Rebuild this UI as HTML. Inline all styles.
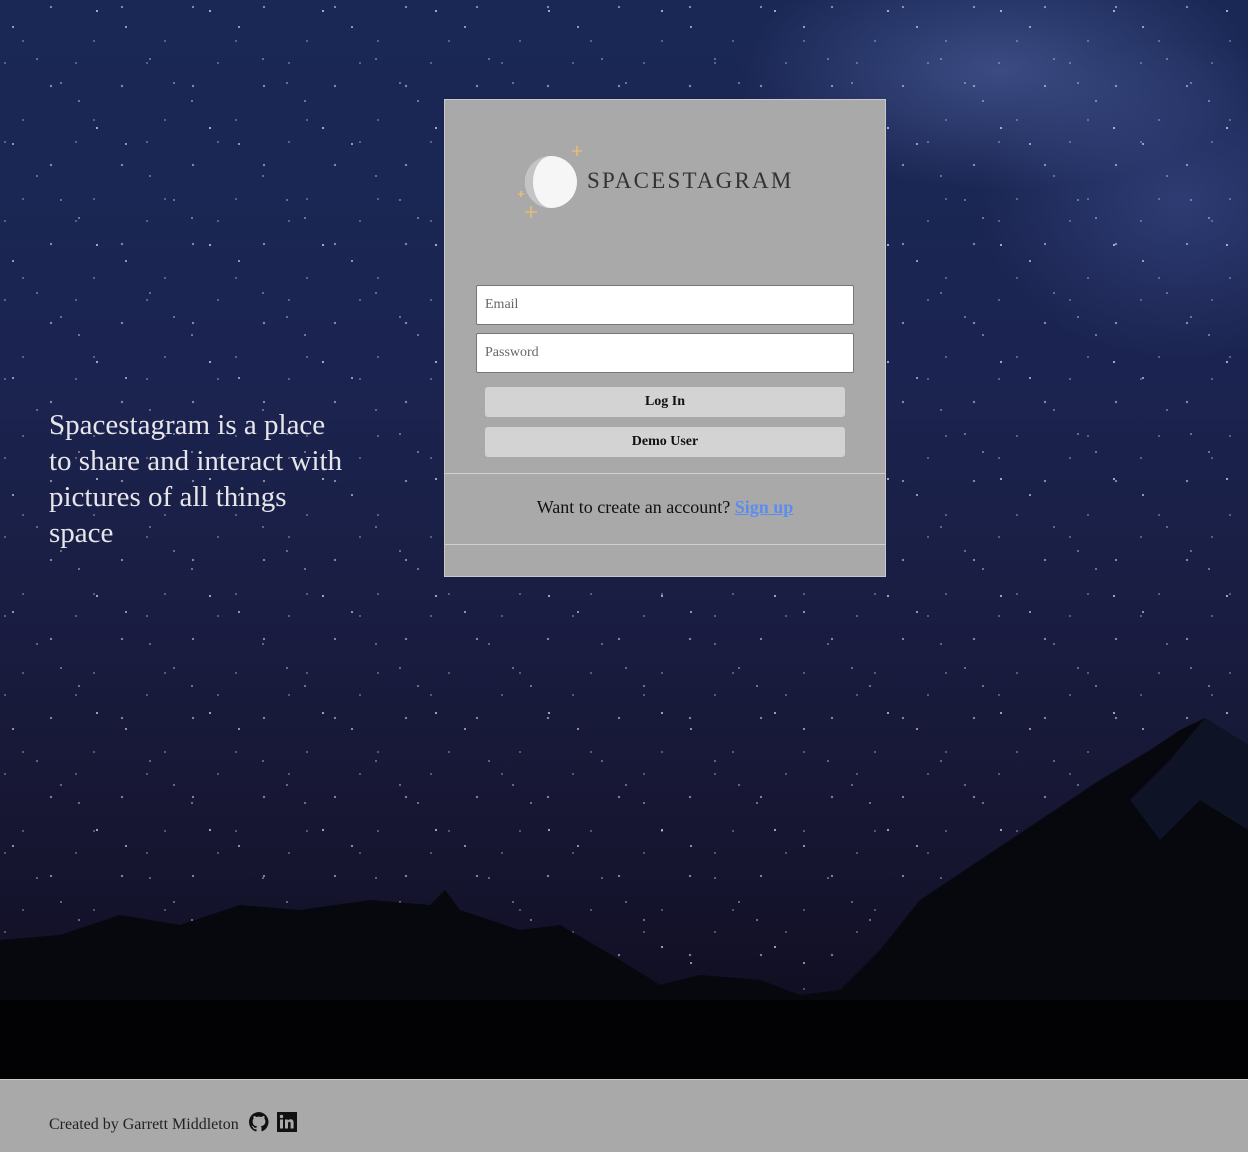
<!DOCTYPE html>
<html><head><meta charset="utf-8"><style>
*{margin:0;padding:0;box-sizing:border-box}
html,body{width:1248px;height:1152px;overflow:hidden;font-family:"Liberation Serif",serif}
.sky{position:absolute;left:0;top:0;width:1248px;height:1079px;
background:
radial-gradient(ellipse 260px 120px at 1000px 70px,rgba(110,130,200,.4),transparent),
radial-gradient(ellipse 200px 160px at 1180px 200px,rgba(90,110,190,.3),transparent),
linear-gradient(180deg,#1a2856 0%,#1b2450 35%,#191c3f 60%,#161530 80%,#0c0b1a 100%);}
.stars{position:absolute;left:0;top:0;width:1248px;height:1079px;opacity:.8;
background-image:
radial-gradient(1.2px 1.2px at 13px 27px,#fff 50%,transparent),
radial-gradient(1px 1px at 61px 83px,#cfe 50%,transparent),
radial-gradient(1.3px 1.3px at 97px 11px,#fff 50%,transparent),
radial-gradient(1px 1px at 37px 59px,#ddf 50%,transparent),
radial-gradient(1px 1px at 79px 101px,#fff 50%,transparent);
background-size:113px 117px;}
.stars2{position:absolute;left:0;top:0;width:1248px;height:1079px;opacity:.6;
background-image:
radial-gradient(1px 1px at 23px 41px,#fff 50%,transparent),
radial-gradient(1.4px 1.4px at 51px 7px,#eef 50%,transparent),
radial-gradient(1px 1px at 5px 63px,#fff 50%,transparent);
background-size:71px 79px;}
.mt{position:absolute;left:0;top:0}
.tag{position:absolute;left:49px;top:407px;color:#e6e6ea;font-size:29px;line-height:36px;width:296px}
.card{position:absolute;left:444px;top:99px;width:442px;height:478px;background:#a9a9a9;border:1px solid #c8c8c8}
.logo{position:absolute;left:72px;top:44px}
.logo span{position:absolute;left:70px;top:24px;font-size:23px;letter-spacing:2.2px;color:#333;white-space:nowrap}
.in{position:absolute;left:31px;width:378px;height:40px;background:#fff;border:1px solid #777;border-radius:2px;font-size:14px;color:#666;padding:11px 8px}
.btn{position:absolute;left:40px;width:360px;height:30px;background:#d3d3d3;border-radius:3px;font-weight:bold;font-size:14px;text-align:center;line-height:30px;color:#111}
.sep{position:absolute;left:0;width:440px;border-top:1px solid #d0d0d0}
.want{position:absolute;left:0;width:440px;top:397px;text-align:center;font-size:18px;color:#111}
.want a{color:#5b8def;font-weight:bold;text-decoration:underline}
.foot{position:absolute;left:0;top:1079px;width:1248px;height:73px;background:#a9a9a9;border-top:1px solid #ccc}
.foot p{position:absolute;left:49px;top:32px;font-size:16px;color:#222}
</style></head><body>
<div class="sky"></div><div class="stars"></div><div class="stars2"></div>
<svg class="mt" width="1248" height="1079">
<polygon fill="#07070e" points="0,940 60,935 120,915 180,925 240,905 300,910 370,900 430,905 445,890 460,910 520,930 560,925 620,960 660,985 700,975 760,980 800,995 840,990 880,950 920,900 980,860 1040,820 1100,780 1150,750 1180,730 1205,718 1248,745 1248,1079 0,1079"/>
<polygon fill="#121830" opacity=".7" points="1205,718 1170,760 1130,800 1160,840 1200,800 1248,830 1248,745"/>
<rect x="0" y="1000" width="1248" height="79" fill="#020204"/>
</svg>
<div class="tag">Spacestagram is a place to share and interact with pictures of all things space</div>
<div class="card">
 <div class="logo">
  <svg width="70" height="80" viewBox="0 0 70 80">
   <circle cx="34" cy="38" r="26" fill="#f6f6f6"/>
   <path d="M34 12a26 26 0 0 0 0 52a18 26 0 0 1 0-52z" fill="#c4c4c4"/>
   <path d="M60 2v10M55 7h10" stroke="#f0c070" stroke-width="1.3"/>
   <path d="M14 62v12M8 68h12" stroke="#f0c070" stroke-width="1.3"/>
   <path d="M4 47v6M1 50h6" stroke="#f0c070" stroke-width="1.3"/>
  </svg>
  <span>SPACESTAGRAM</span>
 </div>
 <div class="in" style="top:185px">Email</div>
 <div class="in" style="top:233px">Password</div>
 <div class="btn" style="top:287px">Log In</div>
 <div class="btn" style="top:327px">Demo User</div>
 <div class="sep" style="top:373px"></div>
 <div class="want">Want to create an account? <a>Sign up</a></div>
 <div class="sep" style="top:444px"></div>
</div>
<div class="foot"><p>Created by Garrett Middleton
<svg width="20" height="20" viewBox="0 0 16 16" style="vertical-align:-3px;margin-left:6px"><path fill="#111" d="M8 0a8 8 0 0 0-2.5 15.6c.4 0 .5-.2.5-.4v-1.5c-2.2.5-2.7-1-2.7-1-.4-.9-.9-1.2-.9-1.2-.7-.5.1-.5.1-.5.8.1 1.2.8 1.2.8.7 1.3 1.9.9 2.3.7.1-.5.3-.9.5-1.1-1.8-.2-3.6-.9-3.6-4 0-.9.3-1.6.8-2.1-.1-.2-.4-1 .1-2.1 0 0 .7-.2 2.2.8a7.5 7.5 0 0 1 4 0c1.5-1 2.2-.8 2.2-.8.4 1.1.2 1.9.1 2.1.5.6.8 1.3.8 2.1 0 3.1-1.9 3.7-3.6 3.9.3.3.5.8.5 1.5v2.2c0 .2.1.5.6.4A8 8 0 0 0 8 0z"/></svg>
<svg width="20" height="20" viewBox="0 0 20 20" style="vertical-align:-3px;margin-left:4px"><rect width="20" height="20" fill="#111"/><rect x="3" y="7.5" width="3" height="9" fill="#a9a9a9"/><circle cx="4.5" cy="4.5" r="1.7" fill="#a9a9a9"/><path d="M8 7.5h2.8v1.3c.5-.9 1.5-1.5 2.8-1.5 2.4 0 3 1.5 3 3.6v5.6h-3v-5c0-1-.3-1.7-1.2-1.7-1 0-1.4.7-1.4 1.700v5H8z" fill="#a9a9a9"/></svg></p></div>
</body></html>
